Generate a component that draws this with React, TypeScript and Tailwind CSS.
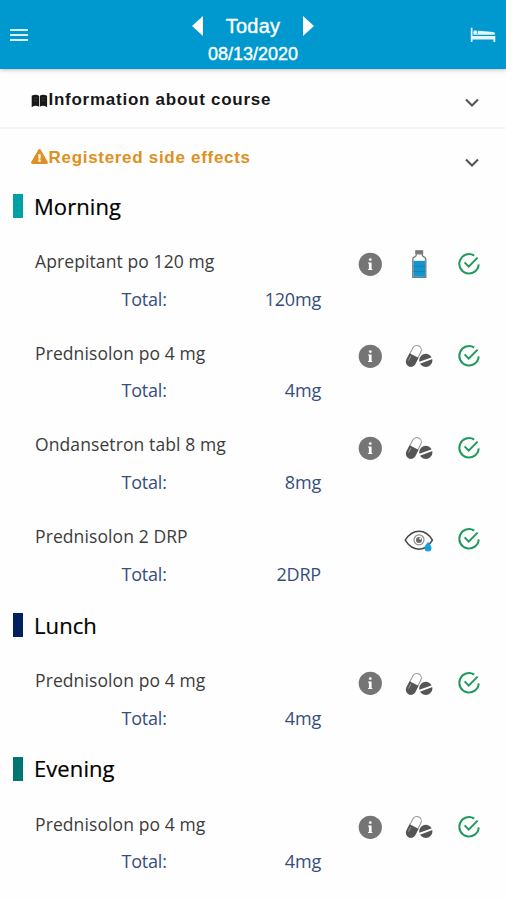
import { FaExclamationTriangle } from 'react-icons/fa';

type Form = 'bottle' | 'pills' | 'eye';

interface Medicine {
  name: string;
  total: string;
  form: Form;
  info?: boolean;
}

interface Section {
  title: string;
  bar: string;
  items: Medicine[];
}

const SECTIONS: Section[] = [
  {
    title: 'Morning',
    bar: 'bg-[#00a0a4]',
    items: [
      { name: 'Aprepitant po 120 mg', total: '120mg', form: 'bottle', info: true },
      { name: 'Prednisolon po 4 mg', total: '4mg', form: 'pills', info: true },
      { name: 'Ondansetron tabl 8 mg', total: '8mg', form: 'pills', info: true },
      { name: 'Prednisolon 2 DRP', total: '2DRP', form: 'eye' },
    ],
  },
  {
    title: 'Lunch',
    bar: 'bg-[#00205f]',
    items: [{ name: 'Prednisolon po 4 mg', total: '4mg', form: 'pills', info: true }],
  },
  {
    title: 'Evening',
    bar: 'bg-[#007672]',
    items: [{ name: 'Prednisolon po 4 mg', total: '4mg', form: 'pills', info: true }],
  },
];

const InfoIcon = () => (
  <svg width="24" height="24" viewBox="0 0 24 24">
    <circle cx="12.3" cy="12.3" r="11.6" fill="#757575" />
    <circle cx="12.3" cy="7.6" r="1.4" fill="#fff" />
    <path d="M10.8 10.5h2.8v6.4h.7v1.2h-4.2v-1.2h.8v-5.2h-.7v-1.2z" fill="#fff" />
  </svg>
);

const CheckIcon = () => (
  <svg width="24" height="24" viewBox="0 0 24 24" fill="none" stroke="#1f9a5a" strokeWidth="2">
    <path d="M17.2 3.6A9.7 9.7 0 1 0 21.7 12.4" />
    <path d="M7.6 10.4l4.1 4.2 8.9-9" />
  </svg>
);

const BottleIcon = () => (
  <svg width="28" height="30" viewBox="0 0 28 30">
    <path d="M10.2 1.2h8v3.6h-8z" fill="#777" />
    <path d="M11.2 4.8v1.4c0 1.6-3.4 1.7-3.4 3.6v18.6h13V9.8c0-1.9-3.4-2-3.4-3.6V4.8z" fill="#fff" stroke="#777" strokeWidth="1.3" />
    <path d="M8.4 11.8h11.8v16H8.4z" fill="#1295d0" />
    <path d="M8.4 17.3h11.8M8.4 22.6h11.8" stroke="#2678a3" strokeWidth="0.9" />
  </svg>
);

const PillsIcon = () => (
  <svg className="mt-px" width="28" height="26" viewBox="0 0 28 26">
    <g transform="rotate(27 8.8 12.8)">
      <rect x="4.4" y="1.8" width="9" height="22" rx="4.5" fill="#fff" stroke="#999" strokeWidth="1.1" />
      <path d="M3.9 12.5h10v6.9a5 5 0 0 1-10 0z" fill="#555" />
      <path d="M6.3 14.5v5" stroke="#999" strokeWidth="1" />
    </g>
    <circle cx="20.8" cy="17.4" r="6.6" fill="#555" />
    <path d="M14 20l14-5.2" stroke="#fff" strokeWidth="1.9" />
  </svg>
);

const EyeIcon = () => (
  <svg className="mt-[2px]" width="30" height="26" viewBox="0 0 30 26" fill="none">
    <path d="M1.2 13.2C5 7.2 9.5 4.3 15 4.3s10 2.9 13.4 8.9C25 19.2 20.5 22.2 15 22.2S5 19.2 1.2 13.2z" stroke="#454545" strokeWidth="1.5" />
    <circle cx="15" cy="12.8" r="5" stroke="#8c8c8c" strokeWidth="1.2" />
    <circle cx="15" cy="13" r="3" fill="#6a6a6a" />
    <circle cx="16.3" cy="11.6" r="1.1" fill="#fff" />
    <path d="M24 14.8c1.5 2.3 3.5 4.1 3.5 6.2a3.5 3.5 0 0 1-7 0c0-2.1 2-3.9 3.5-6.2z" fill="#18a0dc" />
  </svg>
);

const FormIcon = ({ form }: { form: Form }) => {
  if (form === 'bottle') return <BottleIcon />;
  if (form === 'eye') return <EyeIcon />;
  return <PillsIcon />;
};

const BedIcon = () => (
  <svg className="mr-[10px] justify-self-end" width="26" height="16" viewBox="0 0 26 16" fill="#e6f6fd">
    <path d="M.8.7h1.7v8.4h22.8V15h-1.9v-2.5H2.5V15H.8z" />
    <circle cx="5.2" cy="5.2" r="1.9" />
    <path d="M3.2 7.7h21.7V6.6c0-1-.6-1.5-1.6-1.6L8.8 3.7c-.8 0-1.1.3-1.1 1v2.1H3.2z" />
  </svg>
);

const BookIcon = () => (
  <svg className="mt-[2px]" width="17" height="14" viewBox="0 0 17 14" fill="#181818">
    <path d="M.7 1.8C3.2.3 6 .3 8 1.8v11c-2-1.5-4.8-1.3-7.3.4z" />
    <path d="M16.1 1.8C13.6.3 10.8.3 8.8 1.8v11c2-1.5 4.8-1.3 7.3.4z" />
    <path d="M3 4.2c1-.4 2-.4 3 0M3 7c1-.4 2-.4 3 0M10.8 4.2c1-.4 2-.4 3 0M10.8 7c1-.4 2-.4 3 0" stroke="#555" strokeWidth="0.6" />
  </svg>
);

const Chevron = () => (
  <svg className="mt-[9px]" width="14" height="10" viewBox="0 0 14 10" fill="none" stroke="#555" strokeWidth="2.1">
    <path d="M1 1.6l6 6 6-6" />
  </svg>
);

const Header = () => (
  <header className="relative z-10 grid h-[69px] grid-cols-[1fr_auto_1fr] items-center bg-[#0099cf] text-white shadow-[0_1px_4px_rgba(0,0,0,0.25)]">
    <button className="ml-[10px] flex w-[18px] flex-col gap-[3px]" aria-label="Menu">
      <span className="h-[2px] w-full bg-[#d9f1fb]" />
      <span className="h-[2px] w-full bg-[#d9f1fb]" />
      <span className="h-[2px] w-full bg-[#d9f1fb]" />
    </button>
    <div className="flex flex-col items-center pt-[11px]">
      <div className="flex h-7 items-center gap-[23px]">
        <svg width="11" height="20" viewBox="0 0 11 20"><path d="M11 0v20L0 10z" fill="#fff" /></svg>
        <span className="text-[20px] leading-7 tracking-[0.2px] [-webkit-text-stroke:0.4px_white]">Today</span>
        <svg width="11" height="20" viewBox="0 0 11 20"><path d="M0 0v20l11-10z" fill="#fff" /></svg>
      </div>
      <span className="h-[29px] text-[18px] leading-[29px] [-webkit-text-stroke:0.4px_white]">08/13/2020</span>
    </div>
    <BedIcon />
  </header>
);

const MedicineRow = ({ item }: { item: Medicine }) => (
  <div className="h-[91.75px] pl-[35px]">
    <div className="flex h-11 items-center">
      <span className="flex-1 whitespace-nowrap text-[17.5px] tracking-[0.1px] text-[#3c3c3c]">{item.name}</span>
      <div className="mt-[6px] grid w-[148px] grid-cols-[24px_74px_24px] items-center">
        <div>{item.info && <InfoIcon />}</div>
        <div className="flex justify-center"><FormIcon form={item.form} /></div>
        <div className="pl-px"><CheckIcon /></div>
      </div>
    </div>
    <div className="-mt-px ml-[86.5px] flex h-[34px] w-[199.5px] items-center justify-between text-[18px] tracking-[-0.2px] text-[#364e7c]">
      <span>Total:</span>
      <span>{item.total}</span>
    </div>
  </div>
);

export default function App() {
  return (
    <div className="h-[900px] w-full overflow-hidden bg-[#fefefe] font-['Liberation_Sans',sans-serif]">
      <Header />
      <div className="flex h-[60px] items-center justify-between border-b-2 border-[#f6f6f6] pl-[31px] pr-[27px]">
        <div className="flex items-center pt-[3px] text-[17px] font-bold tracking-[0.74px] text-[#181818]">
          <BookIcon />
          <span className="pl-[0.5px]">Information about course</span>
        </div>
        <Chevron />
      </div>
      <div className="flex h-[58px] items-center justify-between pl-[31px] pr-[27px]">
        <div className="flex items-center text-[17px] font-bold tracking-[0.7px] text-[#de9020]">
          <FaExclamationTriangle className="mb-[3px] h-[15px] w-[17px]" />
          <span className="pl-[0.5px]">Registered side effects</span>
        </div>
        <Chevron />
      </div>
      <main className="font-['Open_Sans',sans-serif]">
        {SECTIONS.map(section => (
          <section key={section.title}>
            <div className="mb-[14px] flex h-[38px] items-center gap-[11px] pl-[13px]">
              <span className={`h-6 w-[10px] ${section.bar}`} />
              <h2 className="text-[22px] tracking-[0.08px] text-black [-webkit-text-stroke:0.2px_black]">{section.title}</h2>
            </div>
            {section.items.map(item => (
              <MedicineRow key={item.name} item={item} />
            ))}
          </section>
        ))}
      </main>
    </div>
  );
}
